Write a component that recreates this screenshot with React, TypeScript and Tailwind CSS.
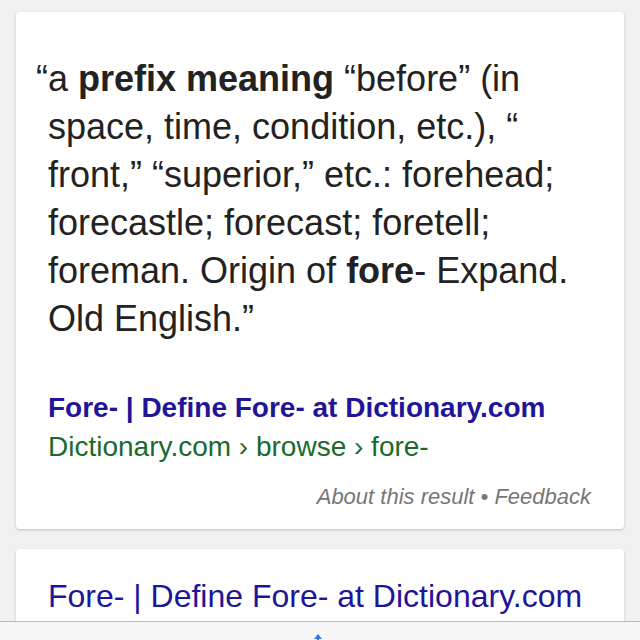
import React from "react";

export default function App() {
  return (
    <div
      className="relative w-[640px] h-[640px] overflow-hidden bg-[#f1f1f1] pt-[12px]"
      style={{ fontFamily: '"Liberation Sans", Arial, sans-serif' }}
    >
      <div className="mx-[16px] bg-white rounded-[4px] shadow-[0_1px_3px_rgba(0,0,0,0.2)] pt-[43px] pb-[20px]">
        <p className="pl-[32px] pr-[30px] -indent-[12px] text-[36px] leading-[48px] text-[#222]">
          “a <b>prefix meaning</b> “before” (in space, time, condition, etc.), “ front,” “superior,” etc.: forehead; forecastle; forecast; foretell; foreman. Origin of <b>fore</b>- Expand. Old English.”
        </p>
        <div className="pl-[32px] mt-[49px] text-[28px] leading-[32px] font-bold text-[#1f1599]">
          Fore- | Define Fore- at Dictionary.com
        </div>
        <div className="pl-[32px] mt-[7px] text-[28px] leading-[32px] text-[#1a6a2c]">
          Dictionary.com › browse › fore-
        </div>
        <div className="pr-[33px] mt-[22px] text-right italic text-[22px] leading-[24px] text-[#777]">
          About this result • Feedback
        </div>
      </div>
      <div className="mx-[16px] mt-[20px] bg-white rounded-[4px] shadow-[0_1px_3px_rgba(0,0,0,0.2)] pt-[30px] pb-[40px]">
        <div className="pl-[32px] text-[32px] leading-[34px] text-[#1f1599]">
          Fore- | Define Fore- at Dictionary.com
        </div>
      </div>
      <div className="absolute left-0 right-0 bottom-0 h-[19px] bg-[#f7f7f7] border-t border-[#b9b9b9]">
        <svg className="absolute left-[312px] top-[12px]" width="12" height="8" viewBox="0 0 12 8">
          <path d="M6 0 L10 5 H7 V8 H5 V5 H2 Z" fill="#2f7de1" />
        </svg>
      </div>
    </div>
  );
}
